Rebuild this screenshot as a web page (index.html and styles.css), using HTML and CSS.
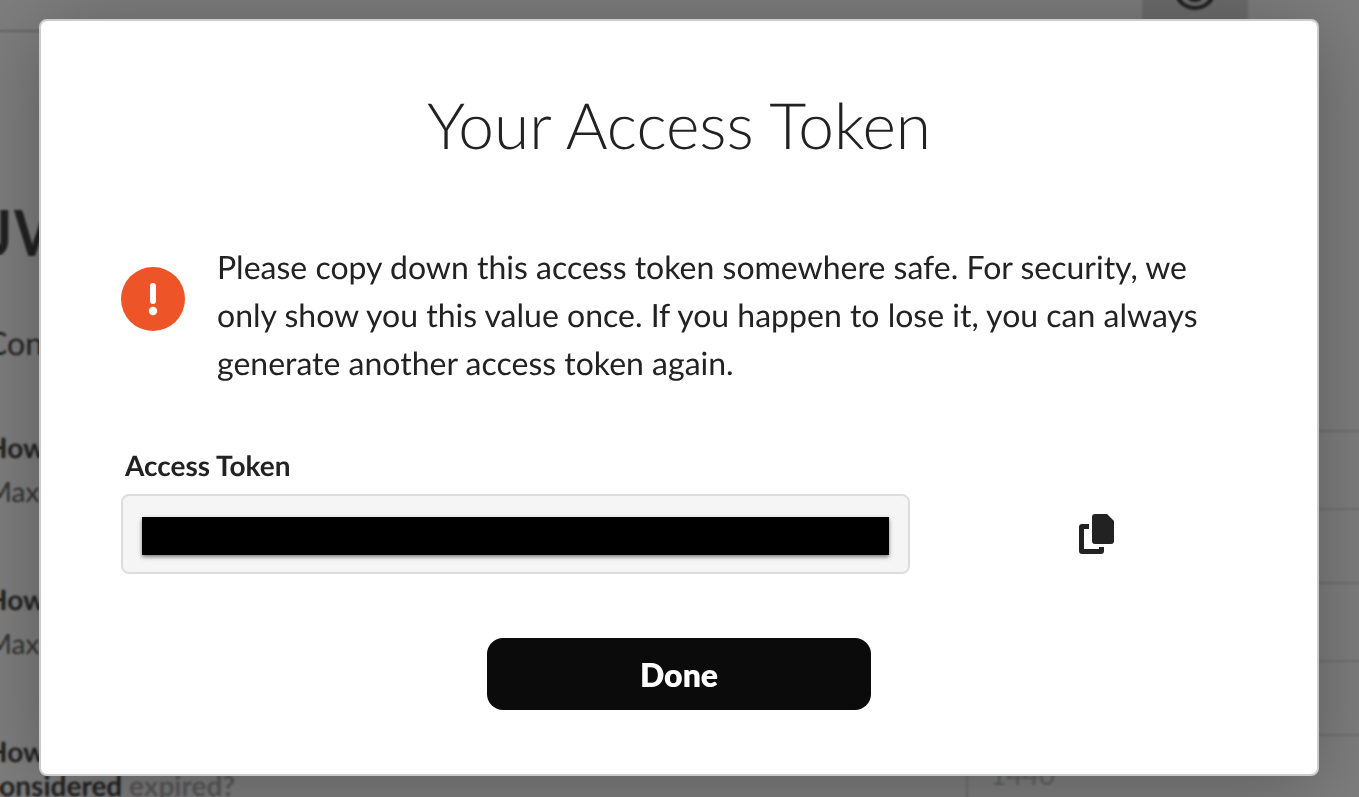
FILE: index.html
```
<!DOCTYPE html>
<html lang="en">
<head>
    <meta charset="UTF-8">
    <title>Your Access Token</title>
    <meta name="viewport" content="width=device-width, initial-scale=1.0">
    <link rel="stylesheet" href="styles.css">
</head>
<body>

    <!-- settings page behind the dialog -->
    <div class="page">
        <div class="toolbar">
            <div class="toolbar-field"></div>
            <button class="toolbar-button" type="button" aria-label="Show">
                <svg width="48" height="48" viewBox="0 0 48 48" fill="none" stroke="#444" stroke-width="4">
                    <circle cx="24" cy="24" r="20"/>
                    <circle cx="24" cy="24" r="12"/>
                </svg>
            </button>
        </div>

        <h2 class="page-title">JW</h2>
        <p class="page-intro">Con</p>

        <div class="setting">
            <label class="setting-label" for="setting1"><strong>How</strong><span class="hint">Max</span></label>
            <input class="setting-input" type="text" id="setting1">
        </div>
        <div class="setting">
            <label class="setting-label" for="setting2"><strong>How</strong><span class="hint">Max</span></label>
            <input class="setting-input" type="text" id="setting2">
        </div>
        <div class="setting">
            <label class="setting-label" for="setting3"><strong>How<br>considered <span class="faded">expired?</span></strong></label>
            <input class="setting-input" type="text" id="setting3" value="1440">
        </div>
    </div>

    <div class="overlay">
        <div class="modal" role="dialog" aria-labelledby="modalTitle">
            <h1 id="modalTitle">Your Access Token</h1>

            <div class="notice">
                <svg class="notice-icon" width="64" height="64" viewBox="0 0 64 64">
                    <circle cx="32" cy="32" r="32" fill="#ed5428"/>
                    <rect x="29" y="16" width="6" height="21" rx="3" fill="#fff"/>
                    <circle cx="32" cy="44" r="4.2" fill="#fff"/>
                </svg>
                <p>Please copy down this access token somewhere safe. For security, we only show you this value once. If you happen to lose it, you can always generate another access token again.</p>
            </div>

            <label class="token-label" for="token">Access Token</label>
            <div class="token-row">
                <div class="token-field">
                    <input type="text" id="token" readonly>
                </div>
                <button class="copy" type="button" aria-label="Copy">
                    <svg width="36" height="40" viewBox="0 0 36 40" fill="#222">
                        <path d="M16 0H28L35 7V27Q35 30 32 30H16Q13 30 13 27V3Q13 0 16 0Z"/>
                        <path d="M10 10V15H5V35H20V33H25V37Q25 40 22 40H3Q0 40 0 37V13Q0 10 3 10Z"/>
                    </svg>
                </button>
            </div>

            <button class="done" type="button">Done</button>
        </div>
    </div>

</body>
</html>
```
FILE: styles.css
```
* {
    box-sizing: border-box;
}
html, body {
    height: 100%;
}
body {
    margin: 0;
    overflow: hidden;
    font-family: Lato, "Liberation Sans", sans-serif;
    color: #222;
    background: #fff;
    text-rendering: geometricPrecision;
}
h1, h2, p {
    margin: 0;
}
button, input {
    font-family: inherit;
}

/* page behind */
.page {
    height: 100%;
    margin: 0 -40px 0 -14px;
    overflow: hidden;
    color: #444;
}
.toolbar {
    display: flex;
    height: 32px;
    padding-right: 151px;
}
.toolbar-field {
    flex: 1;
    border-bottom: 2px solid #ccc;
}
.toolbar-button {
    display: flex;
    justify-content: center;
    align-items: flex-end;
    width: 106px;
    padding: 0 0 20px;
    border: 0;
    background: #dcdcdc;
}
.page-title {
    margin-top: 160px;
    font-size: 64px;
    line-height: 80px;
    font-weight: 600;
}
.page-intro {
    margin: 48px 0 64px;
    font-size: 32px;
    line-height: 46px;
}
.setting {
    display: flex;
    align-items: flex-start;
    height: 152px;
}
.setting-label {
    flex: 0 0 980px;
    font-size: 28px;
    line-height: 34px;
}
.hint {
    display: block;
    margin-top: 10px;
    color: #666;
}
.faded {
    color: #b4b4b4;
}
.setting-input {
    flex: 1;
    height: 80px;
    padding: 0 22px;
    border: 2px solid #e0e0e0;
    background: #fff;
    font-size: 28px;
    color: #c4c4c4;
}

/* dialog */
.overlay {
    position: fixed;
    inset: 0;
    padding: 19px 40px 20px 39px;
    background: rgba(0, 0, 0, 0.51);
    backdrop-filter: blur(1px);
}
.modal {
    padding: 64px 80px;
    border: 2px solid #ccc;
    border-radius: 8px;
    background: #fff;
    box-shadow: 0 8px 80px rgba(0, 0, 0, 0.28);
}
.modal h1 {
    font-size: 64px;
    line-height: 80px;
    font-weight: 300;
    text-align: center;
}
.notice {
    display: flex;
    gap: 32px;
    margin: 78px 0 62px;
}
.notice-icon {
    flex: none;
    margin-top: 24px;
}
.notice p {
    font-size: 32px;
    line-height: 48px;
}
.token-label {
    display: block;
    padding-left: 4px;
    margin-bottom: 13px;
    font-size: 28px;
    line-height: 32px;
    font-weight: 700;
}
.token-row {
    display: grid;
    grid-template-columns: 21fr 10fr;
    align-items: center;
    margin-right: -48px;
}
.token-field {
    display: flex;
    align-items: center;
    height: 80px;
    padding: 4px 19px 0;
    border: 2px solid #ddd;
    border-radius: 8px;
    background: #f5f5f5;
}
.token-field input {
    width: 100%;
    height: 38px;
    padding: 0;
    border: 0;
    background: #000;
    color: #000;
    box-shadow: 0 2px 4px rgba(0, 0, 0, 0.5);
}
.copy {
    display: flex;
    justify-self: center;
    padding: 0;
    border: 0;
    background: none;
}
.done {
    display: block;
    width: 384px;
    height: 72px;
    margin: 64px auto 0;
    border: 0;
    border-radius: 16px;
    background: #0b0b0b;
    color: #fff;
    font-size: 32px;
    font-weight: 800;
}
```
